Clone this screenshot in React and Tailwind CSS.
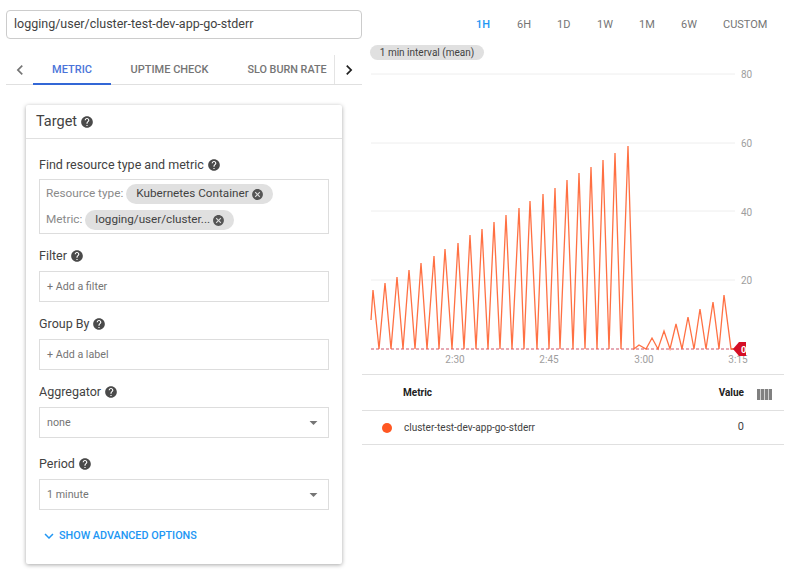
import { MdHelp, MdCancel, MdArrowDropDown, MdChevronLeft, MdChevronRight, MdExpandMore } from 'react-icons/md';

const ranges = ['1H', '6H', '1D', '1W', '1M', '6W', 'CUSTOM'];
const rangeWidths = ['w-[14px]', 'w-[13px]', 'w-[13px]', 'w-[15px]', 'w-[15px]', 'w-[15px]', 'w-[43px]'];

// peaks and valleys read off the reference, in page coordinates
const linePoints = [
  [371, 320], [373, 290], [379, 349], [385, 283], [391, 349], [397, 277], [403, 349], [409, 270], [415, 349],
  [421, 263], [427, 349], [434, 256], [439, 349], [445, 249], [452, 349], [458, 243], [464, 349], [470, 235],
  [476, 349], [482, 229], [488, 349], [494, 222], [500, 349], [506, 215], [512, 349], [519, 208], [524, 349],
  [530, 201], [537, 349], [543, 194], [549, 349], [555, 188], [560, 349], [567, 180], [573, 349], [579, 173],
  [585, 349], [591, 167], [597, 349], [603, 160], [609, 349], [615, 153], [621, 349], [628, 146], [634, 349],
  [639, 345], [646, 349], [652, 338], [658, 349], [664, 331], [670, 349], [676, 324], [682, 349], [688, 317],
  [694, 349], [700, 309], [706, 349], [713, 302], [719, 349], [724, 295], [731, 349], [735, 349],
];

function Help({ className = '' }) {
  return <MdHelp className={`text-[14px] text-[#4a4a4a] ${className}`} />;
}

function Label({ children, className = '' }) {
  return (
    <div className={`flex items-center gap-[3px] h-[16px] text-[12.5px] text-[#424242] ${className}`}>
      {children}
      <Help />
    </div>
  );
}

function Chip({ children }) {
  return (
    <span className="inline-flex items-center h-[20px] pl-[10px] pr-[9px] gap-[2px] rounded-full bg-[#e0e0e0] text-[11.7px] text-[#424242]">
      {children}
      <MdCancel className="text-[13px] text-[#555555]" />
    </span>
  );
}

function Box({ children, className = '' }) {
  return (
    <div className={`flex items-center justify-between h-[31px] pl-[7px] pr-[5px] border border-[#dddddd] text-[10.7px] text-[#757575] ${className}`}>
      {children}
    </div>
  );
}

function Chart() {
  return (
    <svg className="block" width="435" height="305" viewBox="365 65 435 305" fontFamily="Roboto, sans-serif">
      {[74, 143, 211, 280].map((y) => (
        <line key={y} x1="371" x2="735" y1={y} y2={y} stroke="#eeeeee" strokeWidth="1" />
      ))}
      {[[80, 74], [60, 143], [40, 212], [20, 280]].map(([label, y]) => (
        <text key={label} x="741" y={y + 4} fontSize="10" fill="#9e9e9e">{label}</text>
      ))}
      {[['2:30', 455], ['2:45', 549], ['3:00', 644], ['3:15', 738]].map(([label, x]) => (
        <text key={label} x={x} y="363" fontSize="10" fill="#9e9e9e" textAnchor="middle">{label}</text>
      ))}
      <line x1="371" x2="735" y1="349" y2="349" stroke="#d0556a" strokeWidth="1.2" strokeDasharray="3 2" />
      <polyline
        points={linePoints.map((p) => p.join(',')).join(' ')}
        fill="none"
        stroke="#ff5722"
        strokeWidth="1.3"
        strokeOpacity="0.85"
      />
      <polygon points="733,349 739,342 746,342 746,356 739,356" fill="#d50f25" />
      <text x="741" y="352.5" fontSize="9.5" fontWeight="700" fill="#ffffff">0</text>
    </svg>
  );
}

export default function App() {
  return (
    <div className="flex w-[800px] h-[574px] overflow-hidden bg-white font-['Roboto',sans-serif]">
      {/* left column */}
      <div className="w-[362px] shrink-0 pl-[6px] pt-[10px]">
        <div className="flex items-center h-[29px] pl-[7px] border border-[#cccccc] rounded-[4px] text-[12.5px] text-[#424242]">
          logging/user/cluster-test-dev-app-go-stderr
        </div>

        <div className="flex items-stretch h-[30px] mt-[16px] border-b border-[#e0e0e0] text-[11px] font-medium">
          <div className="flex items-center justify-center w-[27px]">
            <MdChevronLeft className="text-[20px] text-[#757575]" />
          </div>
          <div className="flex items-center justify-center w-[78px] pt-[2px] border-b-2 border-[#3367d6] -mb-px text-[#4a74d9]">
            METRIC
          </div>
          <div className="flex items-center justify-center w-[117px] pt-[2px] text-[#757575]">
            UPTIME CHECK
          </div>
          <div className="flex items-center justify-center w-[107px] pl-[12px] pt-[2px] border-r border-[#e4e4e4] text-[10.8px] text-[#757575] whitespace-nowrap">
            SLO BURN RATE
          </div>
          <div className="flex items-center justify-center flex-1">
            <MdChevronRight className="text-[20px] text-[#212121]" />
          </div>
        </div>

        <div className="w-[316px] ml-[20px] mt-[20px] bg-white rounded-[2px] shadow-[0_1px_4px_rgba(0,0,0,0.35)]">
          <div className="flex items-center gap-[3px] h-[34px] pl-[10px] border-b border-[#e0e0e0] text-[14.5px] text-[#424242]">
            Target
            <Help />
          </div>
          <div className="px-[13px] pt-[18px] pb-[21px]">
            <Label>Find resource type and metric</Label>
            <div className="h-[55px] mt-[6px] pl-[6px] pt-[4px] border border-[#dddddd] text-[11.8px] text-[#8a8a8a]">
              <div className="flex items-center gap-[3px] h-[20px] mb-[6px]">
                Resource type:
                <Chip>Kubernetes Container</Chip>
              </div>
              <div className="flex items-center gap-[3px] h-[20px]">
                Metric:
                <Chip>logging/user/cluster...</Chip>
              </div>
            </div>

            <Label className="mt-[14px]">Filter</Label>
            <Box className="mt-[7px]"><span className="pt-[1px]">+ Add a filter</span></Box>

            <Label className="mt-[14px]">Group By</Label>
            <Box className="mt-[7px]"><span className="pt-[1px]">+ Add a label</span></Box>

            <Label className="mt-[14px]">Aggregator</Label>
            <Box className="mt-[7px]">
              <span className="pt-[1px]">none</span>
              <MdArrowDropDown className="text-[19px] text-[#757575]" />
            </Box>

            <Label className="mt-[18px]">Period</Label>
            <Box className="mt-[7px]">
              <span className="pt-[1px]">1 minute</span>
              <MdArrowDropDown className="text-[19px] text-[#757575]" />
            </Box>

            <div className="flex items-center gap-[1px] h-[16px] mt-[18px] -mb-[1px] pl-[1px] text-[10.8px] font-medium text-[#2196f3]">
              <MdExpandMore className="text-[18px]" />
              SHOW ADVANCED OPTIONS
            </div>
          </div>
        </div>
      </div>

      {/* right column */}
      <div className="flex-1 min-w-0">
        <div className="flex items-center h-[16px] mt-[17px] ml-[114px]">
          <div className="flex items-center gap-[27px] text-[11px] text-[#757575]">
            {ranges.map((r, i) => (
              <span key={r} className={`${rangeWidths[i]} text-center whitespace-nowrap ${i === 0 ? 'font-medium text-[#2196f3]' : ''}`}>{r}</span>
            ))}
          </div>
        </div>
        <div className="flex items-center justify-center w-[114px] h-[15px] mt-[12px] ml-[8px] rounded-full bg-[#e0e0e0] text-[10px] text-[#424242]">
          1 min interval (mean)
        </div>
        <div className="ml-[3px] mt-[5px]">
          <Chart />
        </div>
        <div className="w-[422px] mt-[4px] border-t border-[#e0e0e0] text-[10px] text-[#424242]">
          <div className="flex items-center h-[36px] border-b border-[#e0e0e0] font-bold text-[#212121]">
            <span className="ml-[41px] flex-1">Metric</span>
            <span className="mr-[13px]">Value</span>
            <svg className="mr-[12px] mt-[4px]" width="15" height="11" viewBox="0 0 15 11">
              <rect x="0" width="3.3" height="11" fill="#808080" />
              <rect x="3.9" width="3.3" height="11" fill="#808080" />
              <rect x="7.8" width="3.3" height="11" fill="#808080" />
              <rect x="11.7" width="3.3" height="11" fill="#808080" />
            </svg>
          </div>
          <div className="flex items-center h-[34px] border-b border-[#e0e0e0]">
            <span className="w-[10px] h-[10px] ml-[20px] rounded-full bg-[#ff5722]" />
            <span className="ml-[12px] flex-1">cluster-test-dev-app-go-stderr</span>
            <span className="mr-[40px] text-[11px]">0</span>
          </div>
        </div>
      </div>
    </div>
  );
}
